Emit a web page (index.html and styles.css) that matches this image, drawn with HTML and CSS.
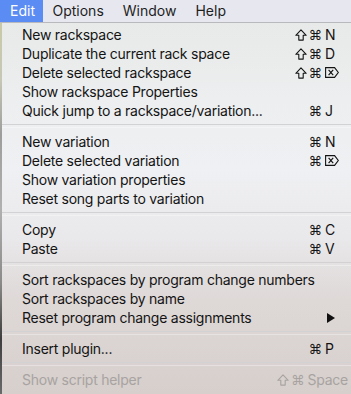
FILE: index.html
```html
<!DOCTYPE html>
<html>
<head>
<meta charset="utf-8">
<link rel="stylesheet" href="styles.css">
</head>
<body>
<div class="menubar">
  <span class="mb-item active">Edit</span>
  <span class="mb-item">Options</span>
  <span class="mb-item">Window</span>
  <span class="mb-item">Help</span>
</div>
<div class="stage">
  <div class="edge"></div>
  <div class="menu">
    <div class="item"><span class="label">New rackspace</span><span class="sc"><svg class="shift" viewBox="0 0 12 12" width="12" height="12"><path d="M6 0.9L11.2 6.3H8.2V11.1H3.8V6.3H0.8Z" fill="none" stroke="currentColor" stroke-width="1.1" stroke-linejoin="round"/></svg><span class="mods">⌘</span><span class="key">N</span></span></div>
    <div class="item"><span class="label">Duplicate the current rack space</span><span class="sc"><svg class="shift" viewBox="0 0 12 12" width="12" height="12"><path d="M6 0.9L11.2 6.3H8.2V11.1H3.8V6.3H0.8Z" fill="none" stroke="currentColor" stroke-width="1.1" stroke-linejoin="round"/></svg><span class="mods">⌘</span><span class="key">D</span></span></div>
    <div class="item"><span class="label">Delete selected rackspace</span><span class="sc"><svg class="shift" viewBox="0 0 12 12" width="12" height="12"><path d="M6 0.9L11.2 6.3H8.2V11.1H3.8V6.3H0.8Z" fill="none" stroke="currentColor" stroke-width="1.1" stroke-linejoin="round"/></svg><span class="mods">⌘</span><span class="key"><svg class="del" viewBox="0 0 14 11" width="14" height="11"><path d="M0.6 0.6H9.6L13.3 5.5L9.6 10.4H0.6Z" fill="none" stroke="currentColor" stroke-width="1.1"/><path d="M3.6 2.9L8.2 8.1M8.2 2.9L3.6 8.1" stroke="currentColor" stroke-width="1.2"/></svg></span></span></div>
    <div class="item"><span class="label">Show rackspace Properties</span></div>
    <div class="item"><span class="label">Quick jump to a rackspace/variation...</span><span class="sc"><span class="mods">⌘</span><span class="key">J</span></span></div>
    <div class="sep"></div>
    <div class="item"><span class="label">New variation</span><span class="sc"><span class="mods">⌘</span><span class="key">N</span></span></div>
    <div class="item"><span class="label">Delete selected variation</span><span class="sc"><span class="mods">⌘</span><span class="key"><svg class="del" viewBox="0 0 14 11" width="14" height="11"><path d="M0.6 0.6H9.6L13.3 5.5L9.6 10.4H0.6Z" fill="none" stroke="currentColor" stroke-width="1.1"/><path d="M3.6 2.9L8.2 8.1M8.2 2.9L3.6 8.1" stroke="currentColor" stroke-width="1.2"/></svg></span></span></div>
    <div class="item"><span class="label">Show variation properties</span></div>
    <div class="item"><span class="label">Reset song parts to variation</span></div>
    <div class="sep"></div>
    <div class="item"><span class="label">Copy</span><span class="sc"><span class="mods">⌘</span><span class="key">C</span></span></div>
    <div class="item"><span class="label">Paste</span><span class="sc"><span class="mods">⌘</span><span class="key">V</span></span></div>
    <div class="sep"></div>
    <div class="item"><span class="label">Sort rackspaces by program change numbers</span></div>
    <div class="item"><span class="label">Sort rackspaces by name</span></div>
    <div class="item"><span class="label">Reset program change assignments</span><span class="arrow"></span></div>
    <div class="sep"></div>
    <div class="item"><span class="label">Insert plugin...</span><span class="sc"><span class="mods">⌘</span><span class="key">P</span></span></div>
    <div class="sep"></div>
    <div class="item disabled"><span class="label">Show script helper</span><span class="sc"><svg class="shift" viewBox="0 0 12 12" width="12" height="12"><path d="M6 0.9L11.2 6.3H8.2V11.1H3.8V6.3H0.8Z" fill="none" stroke="currentColor" stroke-width="1.1" stroke-linejoin="round"/></svg><span class="mods">⌘</span><span class="key wide">Space</span></span></div>
  </div>
</div>
</body>
</html>
```
FILE: styles.css
```css
* { box-sizing: border-box; }
html, body {
  margin: 0;
  padding: 0;
  width: 351px;
  height: 394px;
  overflow: hidden;
  font-family: Inter, "Noto Sans", sans-serif;
  font-size: 14px;
  letter-spacing: -0.25px;
  color: #141414;
}
.menubar {
  height: 23px;
  background: #e7e8ef;
  border-bottom: 1px solid #b9b9bd;
  display: flex;
  align-items: stretch;
}
.mb-item {
  padding: 0 9.5px;
  line-height: 22px;
  color: #1e1e1e;
  letter-spacing: 0;
}
.mb-item.active {
  background: #5b8cf3;
  color: #fff;
  padding: 0 8px 0 10px;
}
.stage {
  display: flex;
  height: 371px;
}
.edge {
  width: 2px;
  flex: none;
  background: linear-gradient(#c9c9a8 0%, #c7c8b5 15%, #9d9e9c 30%, #b0b0b0 50%, #8a8a88 70%, #3e3e3e 85%, #6a6a6a 100%);
}
.menu {
  flex: 1;
  padding-top: 2px;
  background: linear-gradient(180deg, #e8eae9 0%, #eceeef 20%, #eff0f3 40%, #e9e8ea 58%, #ded8d7 75%, #d6cfcc 100%);
}
.item {
  height: 19px;
  padding: 0 14px 0 20px;
  display: flex;
  align-items: center;
  justify-content: space-between;
  white-space: nowrap;
}
.sc {
  display: flex;
  align-items: center;
}
.shift {
  flex: none;
  margin-right: 2px;
}
.mods {
  font-family: "DejaVu Sans", sans-serif;
  font-size: 13.5px;
  letter-spacing: 0;
  margin-right: 3px;
}
.key {
  width: 12px;
  display: flex;
  align-items: center;
  overflow: visible;
}
.key .del { flex: none; }
.key.wide {
  width: auto;
  margin-right: -11px;
}
.disabled { color: #a8a3a1; }
.arrow {
  width: 0;
  height: 0;
  border-top: 5px solid transparent;
  border-bottom: 5px solid transparent;
  border-left: 8px solid #111;
  margin-right: 2px;
}
.sep {
  height: 12px;
  display: flex;
  align-items: center;
}
.sep::before {
  content: "";
  flex: 1;
  height: 2px;
  border-top: 1px solid #d2d2d4;
  border-bottom: 1px solid rgba(255,255,255,0.35);
}
```
